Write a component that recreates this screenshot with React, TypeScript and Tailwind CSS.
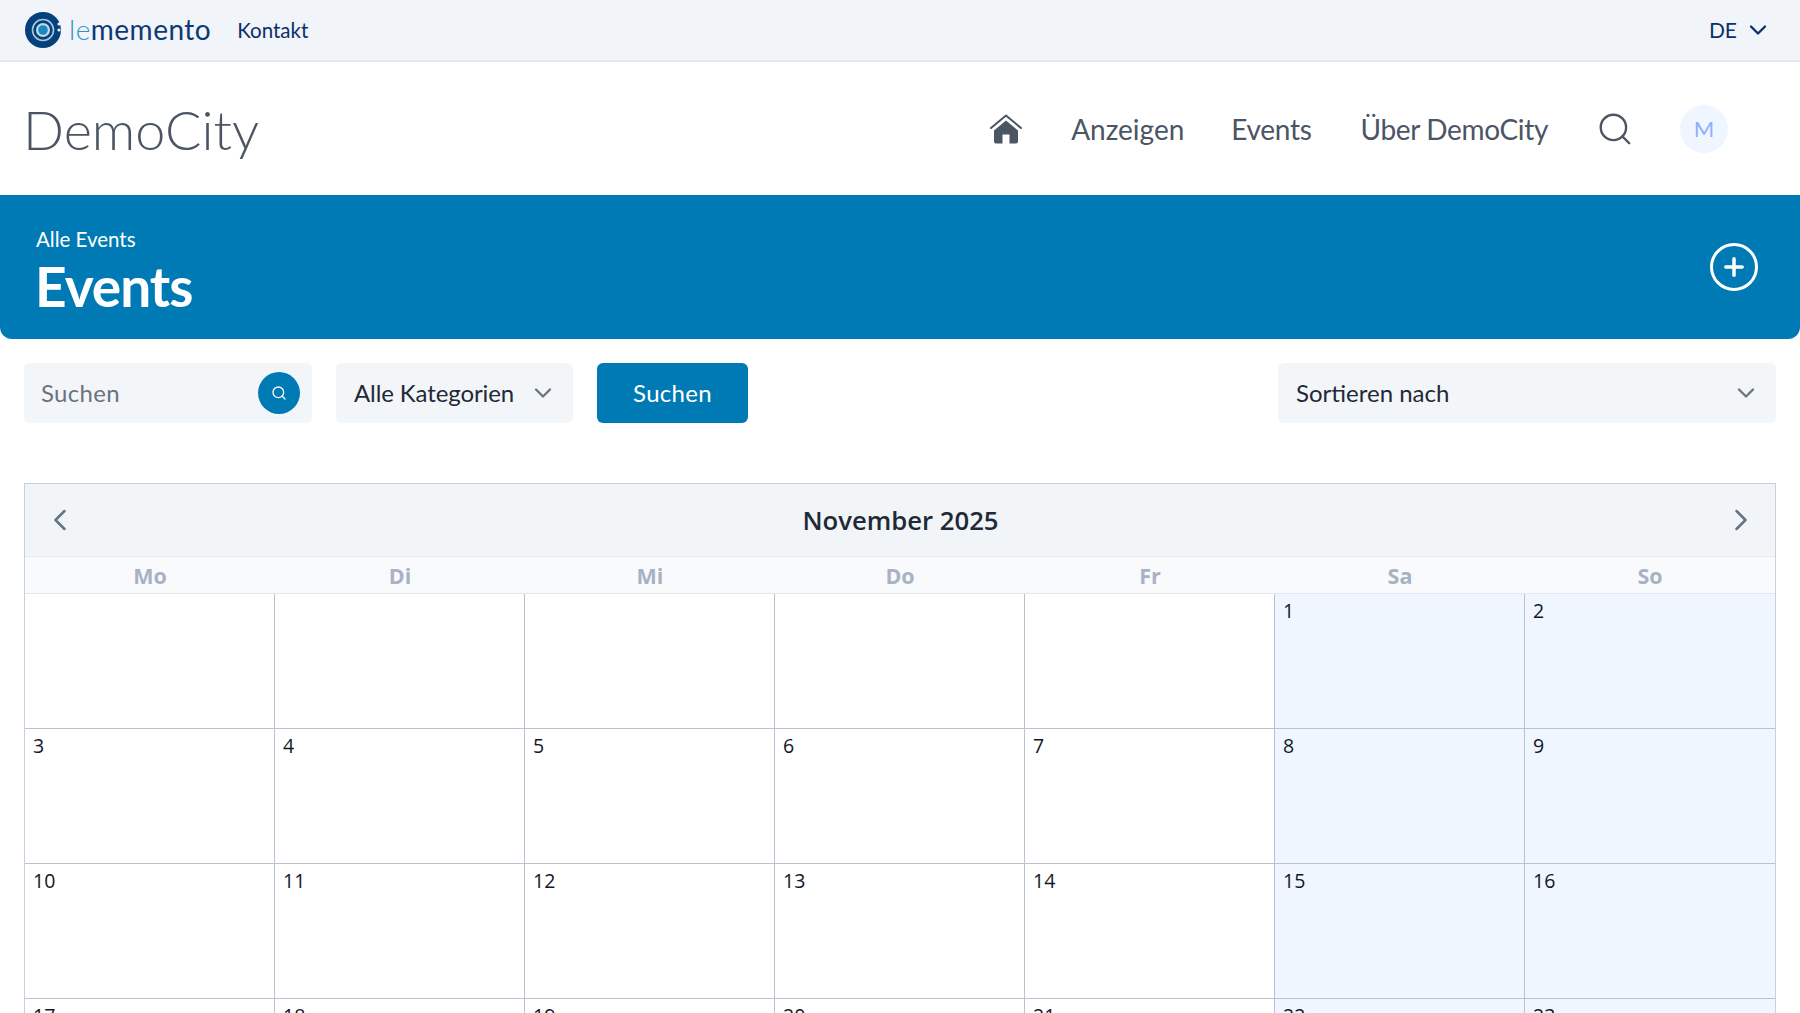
import { ChevronDown, ChevronLeft, ChevronRight, Plus, Search } from "lucide-react";

const sans = "font-['Lato','Noto_Sans',sans-serif]";
const cal = "font-['Open_Sans','Noto_Sans',sans-serif]";

const weekdays = ["Mo", "Di", "Mi", "Do", "Fr", "Sa", "So"];

// November 2025 starts on a Saturday
const days: (number | null)[] = [null, null, null, null, null];
for (let d = 1; d <= 30; d++) days.push(d);

const Logo = () => (
  <svg width="36" height="36" viewBox="0 0 36 36">
    <circle cx="18" cy="18" r="18" fill="#04407c" />
    <circle cx="18" cy="18" r="10.5" fill="none" stroke="#a9c6dc" strokeWidth="1.6" />
    <circle cx="18" cy="18" r="7" fill="#c3d8e6" />
    <circle cx="18" cy="18" r="4.8" fill="#1b87c0" />
    <circle cx="34" cy="12" r="1.6" fill="#f1f4f9" />
    <circle cx="34" cy="18" r="1.6" fill="#f1f4f9" />
  </svg>
);

const HomeIcon = () => (
  <svg width="32" height="30" viewBox="0 0 32 30">
    <path d="M1 14 16 1.5 31 14" fill="none" stroke="#4b5563" strokeWidth="2" strokeLinecap="round" strokeLinejoin="round" />
    <path
      d="M16 6.5 4 16.5V27.5a2 2 0 0 0 2 2h6.5v-9h7v9H26a2 2 0 0 0 2-2V16.5Z"
      fill="#4b5563"
    />
  </svg>
);

const App = () => {
  return (
    <div className={`h-screen overflow-hidden bg-white ${sans}`}>
      <div className="flex h-[62px] items-center justify-between border-b-2 border-[#e5e7eb] bg-[#f1f4f9] pl-[25px] pr-[28px]">
        <div className="flex items-center">
          <Logo />
          <span className="-mt-[3px] ml-[8px] text-[28px] leading-none tracking-[0.5px] text-[#0b3a75]">
            <span className="font-light text-[#2e93c6]">le</span>
            <span>memento</span>
          </span>
          <a className="ml-[26px] text-[20.5px] text-[#0b2f6b]">Kontakt</a>
        </div>
        <div className="flex items-center gap-[7px] text-[21px] text-[#0b2f6b]">
          <span>DE</span>
          <ChevronDown size={28} strokeWidth={2} />
        </div>
      </div>

      <header className="flex h-[133px] items-center justify-between pl-[25px] pr-[72px]">
        <div className="-ml-[2px] mt-[2px] text-[54px] font-light leading-none text-[#4b5563]">DemoCity</div>
        <nav className="flex items-center gap-[49px] text-[28px] text-[#4b5563]">
          <HomeIcon />
          <a>Anzeigen</a>
          <a className="-ml-[2px] tracking-[-0.3px]">Events</a>
          <a className="tracking-[-0.35px]">Über DemoCity</a>
          <Search size={38} strokeWidth={1.5} className="-ml-[1px] -mr-[3px]" />
          <div className="flex h-[48px] w-[48px] items-center justify-center rounded-full bg-[#eff6ff] text-[22px] text-[#8fb0fa]">
            M
          </div>
        </nav>
      </header>

      <section className="flex h-[144px] justify-between rounded-b-xl bg-[#007ab5] pl-[36px] pr-[42px] pt-[30px] text-white">
        <div>
          <div className="text-[20.5px] leading-[28px]">Alle Events</div>
          <h1 className="-ml-[1px] mt-[1px] text-[55px] font-bold leading-[64px] tracking-[-1px]">Events</h1>
        </div>
        <div className="mt-[18px] flex h-[48px] w-[48px] items-center justify-center rounded-full border-[3px] border-white">
          <Plus size={28} strokeWidth={3} />
        </div>
      </section>

      <div className="mx-[24px] mt-[24px] flex h-[60px] text-[24px]">
        <div className="flex w-[288px] items-center justify-between rounded-md bg-[#f3f6f9] pl-[17px] pr-[12px] text-[#6b7280]">
          <span className="tracking-[0.3px]">Suchen</span>
          <div className="flex h-[42px] w-[42px] items-center justify-center rounded-full bg-[#007ab5] text-white">
            <Search size={16} strokeWidth={2} />
          </div>
        </div>
        <div className="ml-[24px] flex w-[237px] items-center justify-between rounded-md bg-[#f3f6f9] pl-[18px] pr-[16px] text-[#1f2937]">
          <span className="tracking-[-0.1px]">Alle Kategorien</span>
          <ChevronDown size={28} strokeWidth={2} className="text-[#6b7280]" />
        </div>
        <button className="ml-[24px] w-[151px] rounded-md bg-[#007ab5] tracking-[0.3px] text-white">Suchen</button>
        <div className="ml-auto flex w-[498px] items-center justify-between rounded-md bg-[#f3f6f9] pl-[18px] pr-[16px] text-[#1f2937]">
          <span>Sortieren nach</span>
          <ChevronDown size={28} strokeWidth={2} className="text-[#6b7280]" />
        </div>
      </div>

      <div className={`mx-[24px] mt-[60px] border-r border-l border-t border-[#c7d0dc] ${cal}`}>
        <div className="flex h-[73px] items-center justify-between border-b border-[#e5e7eb] bg-[#f1f5f8] pl-[17px] pr-[16px]">
          <ChevronLeft size={36} strokeWidth={1.7} className="text-[#64748b]" />
          <h2 className="mt-[2px] text-[25.7px] font-semibold text-[#1f2937]">November 2025</h2>
          <ChevronRight size={36} strokeWidth={1.7} className="text-[#64748b]" />
        </div>
        <div className="grid h-[37px] grid-cols-7 border-b border-[#e5e7eb] bg-[#f9fafb]">
          {weekdays.map((w) => (
            <div key={w} className="text-center text-[21.5px] font-bold leading-[38px] text-[#a7b2c4]">
              {w}
            </div>
          ))}
        </div>
        <div className="grid grid-cols-7">
          {days.map((d, i) => (
            <div
              key={i}
              className={`h-[135px] border-b border-[#b8c2d0] pl-[8px] pt-[2px] text-[19.5px] leading-[30px] text-[#111827] ${
                i % 7 !== 6 ? "border-r" : ""
              } ${i % 7 >= 5 ? "bg-[#eff6ff]" : "bg-white"}`}
            >
              {d}
            </div>
          ))}
        </div>
      </div>
    </div>
  );
};

export default App;
